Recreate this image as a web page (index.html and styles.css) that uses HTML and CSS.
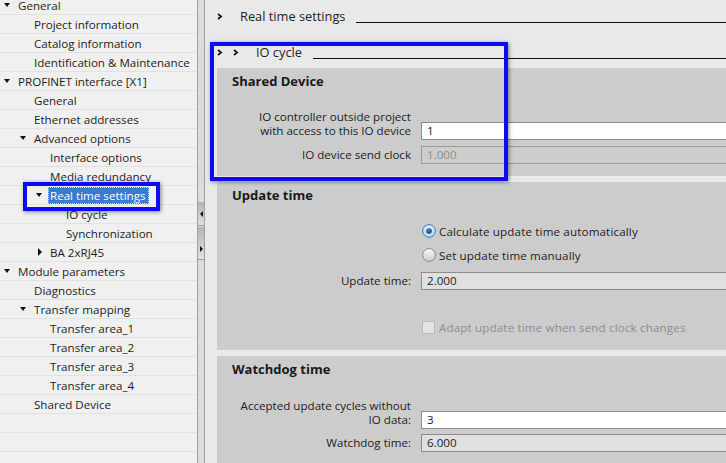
FILE: index.html
```html
<!DOCTYPE html>
<html>
<head>
<meta charset="utf-8">
<link rel="stylesheet" href="styles.css">
</head>
<body>
<div class="app">
  <nav class="tree">
    <ul class="rows">
      <li class="row l0"><span class="tw down"></span>General</li>
      <li class="row l1"><span class="tw"></span>Project information</li>
      <li class="row l1"><span class="tw"></span>Catalog information</li>
      <li class="row l1"><span class="tw"></span>Identification &amp; Maintenance</li>
      <li class="row l0"><span class="tw down"></span>PROFINET interface [X1]</li>
      <li class="row l1"><span class="tw"></span>General</li>
      <li class="row l1"><span class="tw"></span>Ethernet addresses</li>
      <li class="row l1"><span class="tw down"></span>Advanced options</li>
      <li class="row l2"><span class="tw"></span>Interface options</li>
      <li class="row l2"><span class="tw"></span>Media redundancy</li>
      <li class="row l2"><span class="tw down"></span><span class="sel">Real time settings</span></li>
      <li class="row l3"><span class="tw"></span>IO cycle</li>
      <li class="row l3"><span class="tw"></span>Synchronization</li>
      <li class="row l2"><span class="tw right"></span>BA 2xRJ45</li>
      <li class="row l0"><span class="tw down"></span>Module parameters</li>
      <li class="row l1"><span class="tw"></span>Diagnostics</li>
      <li class="row l1"><span class="tw down"></span>Transfer mapping</li>
      <li class="row l2"><span class="tw"></span>Transfer area_1</li>
      <li class="row l2"><span class="tw"></span>Transfer area_2</li>
      <li class="row l2"><span class="tw"></span>Transfer area_3</li>
      <li class="row l2"><span class="tw"></span>Transfer area_4</li>
      <li class="row l1"><span class="tw"></span>Shared Device</li>
      <li class="row"></li>
      <li class="row"></li>
      <li class="row"></li>
    </ul>
  </nav>
  <div class="splitter">
    <div class="sbtn b1"><span class="arr-l"></span></div>
    <div class="sbtn b2"><span class="arr-r"></span></div>
  </div>
  <main class="content">
    <div class="head">
      <span class="chev"><svg width="6" height="7" viewBox="0 0 6 7"><polyline points="1,1 4.2,3.5 1,6" fill="none" stroke="#111" stroke-width="1.6"/></svg></span>
      <span class="ht">Real time settings</span>
      <span class="hline"></span>
    </div>
    <div class="head head2">
      <span class="chev"><svg width="6" height="7" viewBox="0 0 6 7"><polyline points="1,1 4.2,3.5 1,6" fill="none" stroke="#111" stroke-width="1.6"/></svg></span>
      <span class="chev"><svg width="6" height="7" viewBox="0 0 6 7"><polyline points="1,1 4.2,3.5 1,6" fill="none" stroke="#111" stroke-width="1.6"/></svg></span>
      <span class="ht">IO cycle</span>
      <span class="hline"></span>
    </div>

    <section class="panel p1">
      <div class="ptitle">Shared Device</div>
      <div class="frow r-ctrl">
        <div class="lbl">IO controller outside project<br>with access to this IO device</div>
        <div class="inp">1</div>
      </div>
      <div class="frow c r-clock">
        <div class="lbl">IO device send clock</div>
        <div class="inp dis">1.000</div>
      </div>
    </section>

    <section class="panel p2">
      <div class="ptitle">Update time</div>
      <div class="opt r-auto">
        <svg class="radio" width="14" height="14" viewBox="0 0 14 14">
          <defs>
            <radialGradient id="rsel" cx="50%" cy="40%" r="60%">
              <stop offset="0" stop-color="#f4fafe"/>
              <stop offset="1" stop-color="#a9d2f1"/>
            </radialGradient>
            <radialGradient id="rdot" cx="40%" cy="35%" r="70%">
              <stop offset="0" stop-color="#4d8ed0"/>
              <stop offset="1" stop-color="#0d2f5a"/>
            </radialGradient>
          </defs>
          <circle cx="7" cy="7" r="6.4" fill="url(#rsel)" stroke="#3c7fb1" stroke-width="1"/>
          <circle cx="7" cy="7" r="2.8" fill="url(#rdot)"/>
        </svg>
        <span>Calculate update time automatically</span>
      </div>
      <div class="opt">
        <svg class="radio" width="14" height="14" viewBox="0 0 14 14">
          <defs>
            <linearGradient id="roff" x1="0" y1="0" x2="0" y2="1">
              <stop offset="0" stop-color="#f6f6f6"/>
              <stop offset="1" stop-color="#cfcfcf"/>
            </linearGradient>
          </defs>
          <circle cx="7" cy="7" r="6.4" fill="url(#roff)" stroke="#858585" stroke-width="1"/>
        </svg>
        <span>Set update time manually</span>
      </div>
      <div class="frow c r-upd">
        <div class="lbl">Update time:</div>
        <div class="inp ro">2.000</div>
      </div>
      <div class="opt r-adapt dimmed">
        <span class="chk"></span>
        <span>Adapt update time when send clock changes</span>
      </div>
    </section>

    <section class="panel p3">
      <div class="ptitle">Watchdog time</div>
      <div class="frow r-cyc">
        <div class="lbl">Accepted update cycles without<br>IO data:</div>
        <div class="inp">3</div>
      </div>
      <div class="frow c r-wd">
        <div class="lbl">Watchdog time:</div>
        <div class="inp ro">6.000</div>
      </div>
    </section>
  </main>

  <div class="annot a1"></div>
  <div class="annot a2"></div>
</div>
</body>
</html>
```

FILE: styles.css
```css
* { box-sizing: border-box; }
html, body { margin: 0; padding: 0; }
body {
  width: 726px;
  height: 463px;
  overflow: hidden;
  font-family: "Open Sans", "Segoe UI", "DejaVu Sans", sans-serif;
  font-size: 11.6px;
  color: #1e1e1e;
  background: #e9e9e9;
}
.app {
  position: relative;
  display: flex;
  height: 463px;
  overflow: hidden;
}

/* ---------- tree ---------- */
.tree {
  width: 198px;
  flex: none;
  background: #f0f0f0;
  border-right: 1px solid #a0a0a0;
  overflow: hidden;
}
.rows {
  list-style: none;
  margin: -4px 0 0;
  padding: 0;
}
.row {
  height: 19px;
  border-bottom: 1px solid #e2e2e2;
  display: flex;
  align-items: center;
  white-space: nowrap;
}
.l0 { padding-left: 2px; }
.l1 { padding-left: 18px; }
.l2 { padding-left: 34px; }
.l3 { padding-left: 50px; }
.tw {
  width: 16px;
  flex: none;
  display: flex;
  align-items: center;
}
.tw.down::before {
  content: "";
  margin-left: 2px;
  border-left: 3.5px solid transparent;
  border-right: 3.5px solid transparent;
  border-top: 4px solid #111;
}
.tw.right::before {
  content: "";
  margin-left: 4px;
  border-top: 4px solid transparent;
  border-bottom: 4px solid transparent;
  border-left: 4px solid #111;
}
.sel {
  display: inline-block;
  margin-left: -2px;
  padding: 0 2px 0 1px;
  line-height: 15px;
  background: #3b78d8;
  color: #fff;
  border: 1px dotted #cfdcf3;
}

/* ---------- splitter ---------- */
.splitter {
  width: 7px;
  flex: none;
  background: #dcdcdc;
  border-right: 1px solid #a0a0a0;
  padding-top: 202px;
}
.sbtn {
  display: flex;
  justify-content: center;
  background: linear-gradient(#b4b4b4, #e0e0e0);
  border-bottom: 1px solid #9c9c9c;
}
.b1 { height: 24px; align-items: center; }
.b2 { height: 33px; margin-top: 1px; align-items: flex-end; padding-bottom: 7px; }
.arr-l {
  border-top: 3px solid transparent;
  border-bottom: 3px solid transparent;
  border-right: 3px solid #111;
}
.arr-r {
  border-top: 3px solid transparent;
  border-bottom: 3px solid transparent;
  border-left: 3px solid #111;
}

/* ---------- content ---------- */
.content {
  flex: 1;
  min-width: 0;
  padding: 6px 0 0 12px;
  overflow: hidden;
}
.head {
  display: flex;
  height: 20px;
  align-items: center;
  white-space: nowrap;
  font-size: 12.8px;
}
.head2 { margin-top: 16px; }
.chev {
  width: 16px;
  flex: none;
  display: flex;
  align-items: center;
}
.chev svg { display: block; }
.ht { margin-left: 7px; }
.hline {
  flex: 1;
  height: 1px;
  background: #111;
  align-self: flex-start;
  margin-top: 16px;
  margin-left: 11px;
}

.panel {
  background: #cccccc;
  margin-top: 6px;
  margin-right: -12px;
  padding: 4px 0 0 15px;
}
.p1 { height: 108px; }
.p2 { height: 168px; }
.p3 { height: 130px; }
.ptitle {
  font-weight: 700;
  font-size: 13px;
  line-height: 18px;
  color: #1a1a1a;
}
.frow {
  display: flex;
  align-items: flex-end;
}
.frow.c { align-items: center; }
.lbl {
  width: 179px;
  flex: none;
  margin-right: 10px;
  text-align: right;
  line-height: 14px;
  padding-bottom: 2px;
  white-space: nowrap;
}
.frow.c .lbl { padding-bottom: 0; }
.inp {
  flex: 1;
  height: 18px;
  border: 1px solid #8c8c8c;
  background: #fff;
  padding-left: 5px;
  line-height: 16px;
}
.inp.dis { background: #cdcdcd; color: #8c8c8c; border-color: #9a9a9a; }
.inp.ro { background: #e0e0e0; }

.r-ctrl { margin-top: 20px; }
.r-clock { margin-top: 6px; }

.opt {
  display: flex;
  align-items: center;
  height: 24px;
  padding-left: 189px;
  white-space: nowrap;
  letter-spacing: 0.15px;
}
.opt .radio { display: block; margin-left: 1px; margin-right: 3px; flex: none; }
.r-auto { margin-top: 15px; }
.r-upd { margin-top: 5px; }
.r-adapt { margin-top: 25px; }
.chk {
  width: 13px;
  height: 13px;
  margin-left: 1px;
  margin-right: 4px;
  border: 1px solid #bababa;
  background: #e3e3e3;
  flex: none;
}
.dimmed { color: #8e8e8e; }

.r-cyc { margin-top: 21px; }
.r-wd { margin-top: 5px; }

/* ---------- annotation boxes ---------- */
.annot {
  position: absolute;
  border: 4px solid #0c0cf2;
  box-shadow: 1px 1px 4px rgba(0, 0, 0, 0.45);
  pointer-events: none;
}
.a1 { left: 23px; top: 182px; width: 137px; height: 29px; }
.a2 { left: 210px; top: 42px; width: 298px; height: 139px; }
```
